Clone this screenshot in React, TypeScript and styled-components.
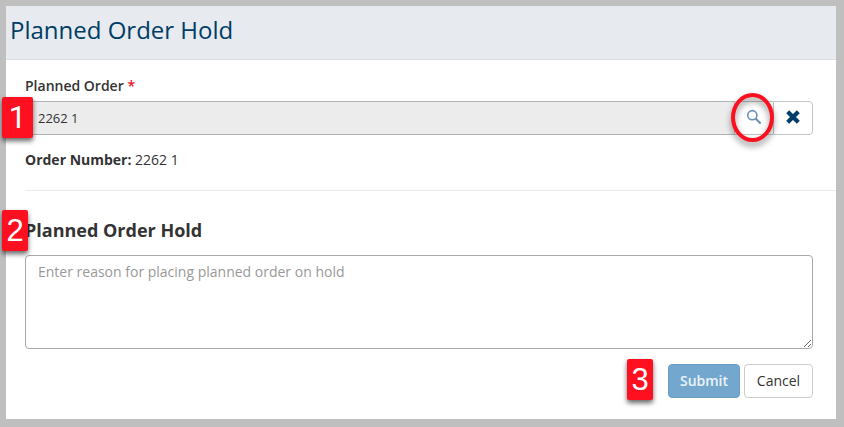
import React from "react";
import styled, { createGlobalStyle } from "styled-components";

const GlobalStyle = createGlobalStyle`
  * { box-sizing: border-box; }
  body { margin: 0; background: #bfbfbf; overflow: hidden; }
`;

const Frame = styled.div`
  width: 844px;
  height: 427px;
  padding: 6px 8px 8px 6px;
  background: #bfbfbf;
  font: 14px/20px "Open Sans", sans-serif;
  color: #333;
`;

const Panel = styled.main`
  position: relative;
  height: 413px;
  background: #fff;
`;

const Header = styled.header`
  height: 54px;
  padding: 7px 4px 0;
  background: #e7eaef;
  border-bottom: 1px solid #d9dde6;
`;

const Title = styled.h1`
  margin: 0;
  font-size: 24px;
  line-height: 33px;
  font-weight: 400;
  color: #003d66;
`;

const Form = styled.form`
  display: flex;
  flex-direction: column;
  padding: 16px 23px 0 19px;
`;

const Label = styled.label`
  height: 25px;
  font-weight: 600;
`;

const Required = styled.span`
  color: #f0142c;
`;

const InputGroup = styled.div`
  display: flex;
  height: 34px;
`;

const OrderInput = styled.input`
  flex: 1;
  min-width: 0;
  padding: 0 12px;
  border: 1px solid #adb3b7;
  border-right-color: #c0c0c0;
  border-radius: 4px 0 0 4px;
  background: #ececec;
  font: 13px "Open Sans", sans-serif;
  color: #333;
  outline: 0;
`;

const IconButton = styled.button<{ $last?: boolean }>`
  display: flex;
  align-items: center;
  justify-content: center;
  width: ${(p) => (p.$last ? 40 : 38)}px;
  padding: 0 0 2px;
  border: 1px solid #c2c4c6;
  border-left-width: ${(p) => (p.$last ? 1 : 0)}px;
  border-right-width: ${(p) => (p.$last ? 1 : 0)}px;
  border-radius: ${(p) => (p.$last ? "0 4px 4px 0" : "0")};
  background: #fff;
`;

const Detail = styled.p`
  margin: 15px 0 0;
  b { font-weight: 700; }
`;

const Divider = styled.hr`
  width: 811px;
  height: 1px;
  margin: 20px 0 0;
  border: 0;
  background: #ebebeb;
`;

const SectionTitle = styled.h2`
  margin: 27px 0 0;
  height: 37px;
  font-size: 18px;
  line-height: 25px;
  font-weight: 700;
`;

const Reason = styled.textarea`
  display: block;
  height: 94px;
  padding: 6px 12px;
  border: 1px solid #aaa;
  border-radius: 4px;
  font: 14px/20px "Open Sans", sans-serif;
  outline: 0;
  &::placeholder { color: #999; opacity: 1; }
`;

const Actions = styled.div`
  display: flex;
  justify-content: flex-end;
  gap: 4px;
  margin-top: 15px;
`;

const Button = styled.button<{ $primary?: boolean }>`
  width: ${(p) => (p.$primary ? 72 : 69)}px;
  height: 34px;
  padding: 0;
  border: 1px solid ${(p) => (p.$primary ? "#6a9fc7" : "#ccc")};
  border-radius: 4px;
  background: ${(p) => (p.$primary ? "#74a7cd" : "#fff")};
  color: ${(p) => (p.$primary ? "#eaf3f9" : "#333")};
  font: ${(p) => (p.$primary ? 600 : 400)} 14px/20px "Open Sans", sans-serif;
`;

const Marker = styled.span<{ $x: number; $y: number; $w: number; $plain?: boolean }>`
  position: absolute;
  left: ${(p) => p.$x}px;
  top: ${(p) => p.$y}px;
  width: ${(p) => p.$w}px;
  height: 41px;
  border-radius: 2px;
  background: #ff1020;
  box-shadow: 0 3px 5px rgba(0, 0, 0, 0.6);
  color: #fff;
  font: 31px/41px ${(p) => (p.$plain ? "Roboto" : '"Liberation Sans"')}, Arial, sans-serif;
  text-align: center;
`;

const Ring = styled.span`
  position: absolute;
  left: 725px;
  top: 87px;
  width: 43px;
  height: 49px;
  border: 4px solid #fb1020;
  border-radius: 50%;
  filter: drop-shadow(0 4px 3px rgba(0, 0, 0, 0.45));
  pointer-events: none;
`;

export default function App() {
  return (
    <>
      <GlobalStyle />
      <Frame>
        <Panel>
          <Header>
            <Title>Planned Order Hold</Title>
          </Header>
          <Form onSubmit={(e) => e.preventDefault()}>
            <Label htmlFor="order">
              Planned Order <Required>*</Required>
            </Label>
            <InputGroup>
              <OrderInput id="order" readOnly value="2262 1" />
              <IconButton type="button" aria-label="Search">
                <svg width="16" height="16" viewBox="0 0 16 16" fill="none" stroke="#6a90b4">
                  <circle cx="6.3" cy="6.2" r="4.6" strokeWidth="1.6" />
                  <path d="M9.6 9.5 L14.6 14.5" strokeWidth="2" />
                </svg>
              </IconButton>
              <IconButton type="button" aria-label="Clear" $last>
                <svg width="14" height="14" viewBox="0 0 14 14" stroke="#003d6b" strokeWidth="4.2" strokeLinejoin="round">
                  <path d="M1.7 1.7 L12.3 12.3 M12.3 1.7 L1.7 12.3" />
                </svg>
              </IconButton>
            </InputGroup>
            <Detail>
              <b>Order Number:</b> 2262 1
            </Detail>
            <Divider />
            <SectionTitle>Planned Order Hold</SectionTitle>
            <Reason placeholder="Enter reason for placing planned order on hold" />
            <Actions>
              <Button type="submit" $primary>Submit</Button>
              <Button type="button">Cancel</Button>
            </Actions>
          </Form>
          <Ring />
          <Marker $x={-4} $y={91} $w={31} $plain>1</Marker>
          <Marker $x={-4} $y={204} $w={26}>2</Marker>
          <Marker $x={621} $y={353} $w={26}>3</Marker>
        </Panel>
      </Frame>
    </>
  );
}
